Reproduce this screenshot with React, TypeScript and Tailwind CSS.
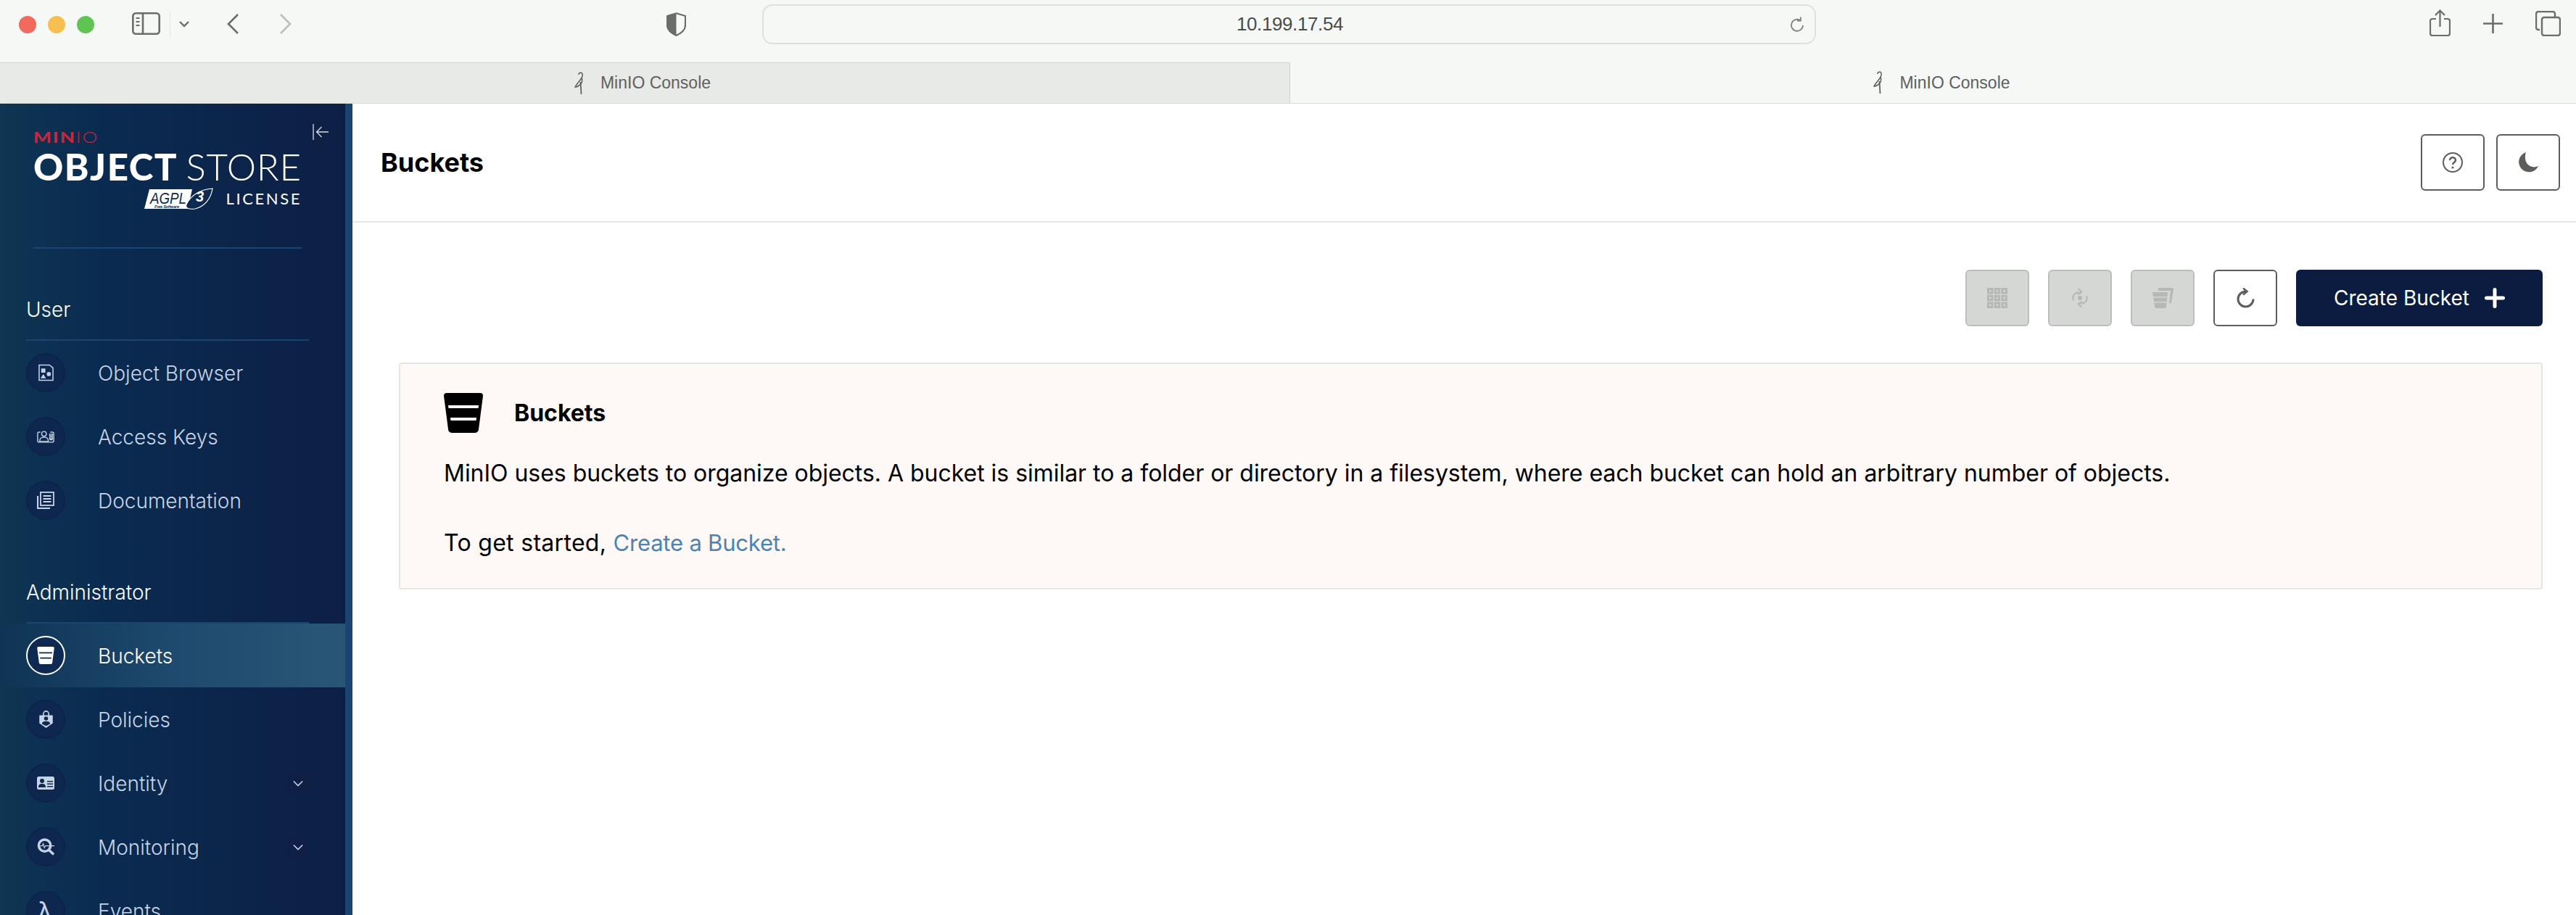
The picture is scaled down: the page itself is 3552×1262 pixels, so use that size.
import { ReactNode } from 'react';

const Sans = "font-['Liberation_Sans',sans-serif]";

function BucketIcon({ className, stripe }: { className: string; stripe: string }) {
  return (
    <svg viewBox="0 0 54 55" className={className}>
      <path
        d="M4 0h46a4 4 0 0 1 4 4l-6 46a5 5 0 0 1-5 5H11a5 5 0 0 1-5-5L0 4a4 4 0 0 1 4-4z"
        fill="currentColor"
      />
      <path d="M6 17h42l-.5 4H6.500zM9 34h36l-.5 4H9.500z" fill={stripe} />
    </svg>
  );
}

function BirdIcon({ className }: { className: string }) {
  return (
    <svg viewBox="0 0 14 32" className={className} fill="none" stroke="#5c5e5c" strokeWidth="1.500">
      <path d="M6 4C6 1 10 0 11 3c1 3-1 5-2 7-2 3-6 7-8 11 4 0 7-3 9-6 1-3 1-5 0-7" />
      <path d="M8.500 14l1 17" strokeWidth="1.700" />
    </svg>
  );
}

function ObjectBrowserIcon() {
  return (
    <svg viewBox="0 0 22 24" className="w-[21px] h-[24px]" fill="currentColor">
      <path d="M1 1h15l5 4v18H1z" fill="none" stroke="currentColor" strokeWidth="1.600" />
      <rect x="4" y="6" width="6" height="6" />
      <circle cx="15" cy="14" r="3" />
      <path d="M7 14l4 6H3z" />
    </svg>
  );
}

function AccessKeysIcon() {
  return (
    <svg viewBox="0 0 26 20" className="w-[24px] h-[19px]" fill="none" stroke="currentColor" strokeWidth="1.500">
      <path d="M5 3H3a2 2 0 0 0-2 2v11a2 2 0 0 0 2 2h20a2 2 0 0 0 2-2V5a2 2 0 0 0-2-2h-3" />
      <circle cx="10.500" cy="5.500" r="3.500" />
      <path d="M4 17c0-5 2-6.500 6.500-6.500S17 12 17 17z" />
      <path d="M19 6h4v2.500h-4zM19 10.500h4V13h-4zM19 14.500h4" strokeWidth="1.400" />
    </svg>
  );
}

function DocumentationIcon() {
  return (
    <svg viewBox="0 0 24 24" className="w-[24px] h-[24px]" fill="none" stroke="currentColor" strokeWidth="1.800">
      <rect x="5" y="1" width="18" height="18" />
      <path d="M8.500 6h11M8.500 10h11M8.500 14h11" />
      <path d="M1 6v17h17" strokeWidth="2.200" />
    </svg>
  );
}

function PoliciesIcon() {
  return (
    <svg viewBox="0 0 20 26" className="w-[19px] h-[24px]" fill="currentColor">
      <path d="M6 8V5a4 4 0 0 1 8 0v3" fill="none" stroke="currentColor" strokeWidth="1.800" />
      <path d="M0 7h20v12l-10 7-10-7z" />
      <circle cx="10" cy="12" r="3" fill="#0f2a52" />
      <path d="M4 20c0-3 2-4 6-4s6 1 6 4l-6 3z" fill="#0f2a52" />
    </svg>
  );
}

function IdentityIcon() {
  return (
    <svg viewBox="0 0 24 18" className="w-[24px] h-[18px]" fill="currentColor">
      <rect width="24" height="18" rx="2.500" />
      <circle cx="7" cy="6" r="3" fill="#0f2a52" />
      <path d="M2 15c0-4 2-5 5-5s5 1 5 5z" fill="#0f2a52" />
      <path d="M14 6h8v1.500h-8zM14 9.500h8V11h-8zM14 13h8v1.500h-8z" fill="#0f2a52" />
    </svg>
  );
}

function MonitoringIcon() {
  return (
    <svg viewBox="0 0 25 25" className="w-[25px] h-[24px]" fill="none" stroke="currentColor">
      <circle cx="10.500" cy="10.500" r="8.500" strokeWidth="3.600" />
      <path d="M16.500 17l7 6.500" strokeWidth="3.600" />
      <path d="M4 11h3l1.500-3 1.500 6 1.500-3h13" strokeWidth="1.200" />
    </svg>
  );
}

function NavItem({ label, icon, active, expand }: { label: string; icon: ReactNode; active?: boolean; expand?: boolean }) {
  return (
    <div
      className={`flex h-[88px] shrink-0 items-center pl-[36px] pr-[50px] ${
        active ? 'bg-linear-to-r from-[#0f3454] via-[#1d4a6e] to-[#2a5676] text-white' : 'text-[#c6d4e6]'
      }`}
    >
      <div
        className={`flex size-[54px] shrink-0 items-center justify-center rounded-full ${
          active ? 'border-2 border-white bg-[#0f2a52] text-white' : 'border-2 border-[#0d2349] bg-[#0e274f] text-[#c6d4e6]'
        }`}
      >
        {icon}
      </div>
      <span className="ml-[45px] mt-[2px] text-[28px] font-light leading-none">{label}</span>
      {expand && (
        <div className="ml-auto flex size-[30px] items-center justify-center rounded-[4px] bg-[#0f1f45] text-[#c6d4e6]">
          <svg viewBox="0 0 16 10" className="w-[14px] h-[9px]" fill="none" stroke="currentColor" strokeWidth="1.800">
            <path d="M1 1.500l7 7 7-7" />
          </svg>
        </div>
      )}
    </div>
  );
}

function SectionLabel({ children }: { children: ReactNode }) {
  return (
    <div className="mx-[36px] mr-[50px] flex h-[60px] shrink-0 items-center border-b-2 border-[#1a4570] pb-[25px] text-[28px] font-light leading-none text-white">
      {children}
    </div>
  );
}

function Sidebar() {
  return (
    <aside className="relative flex h-full w-[486px] shrink-0 flex-col overflow-hidden border-r-[10px] border-[#1a4570] bg-linear-to-r from-[#0f3552] via-[#0a2b50] via-30% to-[#0d1f45] font-['Inter',sans-serif]">
      <button className="absolute left-[431px] top-[27px] text-[#d5dbe6]">
        <svg viewBox="0 0 23 24" className="w-[23px] h-[24px]" fill="none" stroke="currentColor" strokeWidth="1.300">
          <path d="M1 1v22M22 12H6M12.500 5L5.500 12l7 7" />
        </svg>
      </button>

      {/* logo */}
      <div className="mx-[46px] mr-[60px] flex h-[200px] shrink-0 flex-col border-b-2 border-[#1a4570] pt-[36px] font-['Lato',sans-serif]">
        <div className="h-[20px] origin-left scale-x-[1.25] text-[21px] leading-[20px] tracking-[1.500px] text-[#c0293f]">
          <span className="font-black">MIN</span>
          <span className="font-light">IO</span>
        </div>
        <div className="mt-[9px] flex h-[42px] items-center justify-between text-[51px] leading-none text-white">
          <span className="font-black tracking-[1.500px]">OBJECT</span>
          <span className="font-light tracking-[0.800px]">STORE</span>
        </div>
        <div className="mt-[8px] flex items-center justify-end">
          <svg viewBox="0 0 95 32" className="w-[95px] h-[32px]">
            <path d="M7 3h59l-6 27H0z" fill="#fff" />
            <text x="8" y="23" fontFamily="Liberation Sans" fontSize="22" fontStyle="italic" fontWeight="400" textLength="50" lengthAdjust="spacingAndGlyphs" fill="#0e2a50">
              AGPL
            </text>
            <text x="14" y="28.500" fontFamily="Liberation Sans" fontSize="5.500" fontWeight="700" fontStyle="italic" textLength="34" fill="#0e2a50">
              Free Software
            </text>
            <path d="M58 24c6-13 20-21 36-22-2 14-11 25-24 28-9 1-14-1-12-6z" fill="#0e2a50" stroke="#fff" strokeWidth="1.200" />
            <text x="71" y="20" fontFamily="Liberation Sans" fontSize="20" fontStyle="italic" fontWeight="700" fill="#fff">
              3
            </text>
          </svg>
          <span className="ml-[18px] text-[22px] leading-none tracking-[2.600px] text-white">LICENSE</span>
        </div>
      </div>

      <div className="flex flex-col pt-[67px]">
        <SectionLabel>User</SectionLabel>
        <NavItem label="Object Browser" icon={<ObjectBrowserIcon />} />
        <NavItem label="Access Keys" icon={<AccessKeysIcon />} />
        <NavItem label="Documentation" icon={<DocumentationIcon />} />
        <div className="h-[66px] shrink-0" />
        <SectionLabel>Administrator</SectionLabel>
        <NavItem label="Buckets" active icon={<BucketIcon className="w-[24px] h-[24px] text-white" stripe="#0f2a52" />} />
        <NavItem label="Policies" icon={<PoliciesIcon />} />
        <NavItem label="Identity" expand icon={<IdentityIcon />} />
        <NavItem label="Monitoring" expand icon={<MonitoringIcon />} />
        <NavItem label="Events" icon={<span className="text-[34px] leading-none">λ</span>} />
      </div>
    </aside>
  );
}

function OutlineButton({ children, className }: { children: ReactNode; className?: string }) {
  return (
    <button className={`flex h-[78px] w-[88px] items-center justify-center rounded-[6px] border-2 border-[#5c5e5b] bg-white text-[#5c5e5b] ${className ?? ''}`}>
      {children}
    </button>
  );
}

function DisabledButton({ children }: { children: ReactNode }) {
  return (
    <button disabled className="flex h-[78px] w-[88px] items-center justify-center rounded-[6px] border-2 border-[#bcbebb] bg-[#d5d7d4] text-[#b6b8b5]">
      {children}
    </button>
  );
}

function BrowserChrome() {
  return (
    <>
      <div className={`flex h-[86px] shrink-0 items-start bg-[#f6f8f5] text-[#6b6d6a] ${Sans}`}>
        <div className="mt-[22px] ml-[26px] flex gap-[16px]">
          <span className="size-[24px] rounded-full bg-[#f16a5e]" />
          <span className="size-[24px] rounded-full bg-[#f6bf4f]" />
          <span className="size-[24px] rounded-full bg-[#5fc454]" />
        </div>
        <svg viewBox="0 0 39 31" className="ml-[52px] mt-[17px] w-[39px] h-[31px]" fill="none" stroke="currentColor" strokeWidth="2.600">
          <rect x="1.300" y="1.300" width="36.400" height="28.400" rx="4" />
          <path d="M15 1.300v28.400" />
          <path d="M5.500 8h5M5.500 13h5M5.500 18h5" strokeWidth="2" />
        </svg>
        <span className="ml-[13px] mt-[16px] h-[36px] w-[1px] bg-[#e3e5e2]" />
        <svg viewBox="0 0 14 9" className="ml-[12px] mt-[29px] w-[14px] h-[9px]" fill="none" stroke="currentColor" strokeWidth="2.400">
          <path d="M1 1l6 6 6-6" />
        </svg>
        <svg viewBox="0 0 18 28" className="ml-[51px] mt-[19px] w-[18px] h-[28px]" fill="none" stroke="currentColor" strokeWidth="2.600">
          <path d="M16 1L3 14l13 13" />
        </svg>
        <svg viewBox="0 0 18 28" className="ml-[55px] mt-[19px] w-[18px] h-[28px] text-[#bcbebb]" fill="none" stroke="currentColor" strokeWidth="2.600">
          <path d="M2 1l13 13L2 27" />
        </svg>
        <svg viewBox="0 0 27 33" className="ml-[516px] mt-[17px] w-[27px] h-[33px]" fill="none">
          <path d="M13.500 1.300L26 5v13c0 7-6 11-12.500 14C7 29 1 25 1 18V5z" stroke="currentColor" strokeWidth="2.200" />
          <path d="M13.500 1.300L1 5v13c0 7 6 11 12.500 14z" fill="currentColor" />
        </svg>
        <div className="ml-[105px] mt-[6px] flex h-[55px] w-[1453px] items-center rounded-[14px] border-2 border-[#dfe1de] pl-[652px] text-[26px] text-[#4a4c4a]">
          <span className="tracking-[-0.400px]">10.199.17.54</span>
          <svg viewBox="0 0 24 24" className="ml-auto mr-[12px] w-[24px] h-[24px] text-[#808280]" fill="none" stroke="currentColor" strokeWidth="1.800">
            <path d="M20 13a8 8 0 1 1-3-6.500M17 1.500v5h-5" />
          </svg>
        </div>
        <svg viewBox="0 0 29 37" className="ml-[846px] mt-[13px] w-[29px] h-[37px]" fill="none" stroke="currentColor" strokeWidth="2.200">
          <path d="M9 13H4a3 3 0 0 0-3 3v17a3 3 0 0 0 3 3h21a3 3 0 0 0 3-3V16a3 3 0 0 0-3-3h-5" />
          <path d="M14.500 24V2M8 8l6.500-6.500L21 8" />
        </svg>
        <svg viewBox="0 0 27 27" className="ml-[45px] mt-[19px] w-[27px] h-[27px]" fill="none" stroke="currentColor" strokeWidth="2.600">
          <path d="M13.500 0v27M0 13.500h27" />
        </svg>
        <svg viewBox="0 0 35 35" className="ml-[45px] mt-[15px] w-[35px] h-[35px]" fill="none" stroke="currentColor" strokeWidth="2.400">
          <path d="M6 26H4a3 3 0 0 1-3-3V4a3 3 0 0 1 3-3h20a3 3 0 0 1 3 3v4" />
          <rect x="9" y="9" width="25" height="25" rx="3" />
        </svg>
      </div>
      <div className={`flex h-[57px] shrink-0 border-b-[1px] border-[#d8dad7] text-[23px] text-[#5f615f] ${Sans}`}>
        <div className="flex w-[1779px] items-center justify-center gap-[22px] border-r border-t border-[#d3d5d2] bg-[#e8eae7] pr-[6px]">
          <BirdIcon className="w-[14px] h-[32px]" />
          <span>MinIO Console</span>
        </div>
        <div className="flex flex-1 items-center justify-center gap-[22px] bg-[#f6f8f5] pl-[24px]">
          <BirdIcon className="w-[14px] h-[32px]" />
          <span>MinIO Console</span>
        </div>
      </div>
    </>
  );
}

export default function App() {
  return (
    <div className="flex h-[1262px] w-[3552px] flex-col overflow-hidden bg-white">
      <BrowserChrome />
      <div className="flex min-h-0 flex-1">
        <Sidebar />
        <main className="flex min-w-0 flex-1 flex-col font-['Inter',sans-serif]">
          <header className="flex h-[164px] shrink-0 items-center justify-between border-b-2 border-[#e5e7e4] pl-[39px] pr-[22px]">
            <h1 className="text-[36px] font-bold leading-none text-black">Buckets</h1>
            <div className="flex gap-[16px]">
              <OutlineButton>
                <svg viewBox="0 0 28 28" className="w-[28px] h-[28px]" fill="none" stroke="currentColor" strokeWidth="2">
                  <circle cx="14" cy="14" r="13" />
                  <path d="M10 11c0-5 8-5 8 0 0 3-4 3-4 6" strokeWidth="2.600" />
                  <circle cx="14" cy="21" r="1.600" fill="currentColor" stroke="none" />
                </svg>
              </OutlineButton>
              <OutlineButton>
                <svg viewBox="0 0 28 28" className="w-[28px] h-[28px]" fill="currentColor">
                  <path d="M11 0a14 14 0 1 0 17 19C18 24 6 15 11 0z" />
                </svg>
              </OutlineButton>
            </div>
          </header>

          <div className="flex flex-col pl-[64px] pr-[46px] pt-[65px]">
            <div className="flex justify-end gap-[26px]">
              <DisabledButton>
                <svg viewBox="0 0 28 28" className="w-[28px] h-[28px]" fill="currentColor">
                  <path
                    fillRule="evenodd"
                    d="M0 0h8.500v8.500H0zM3 3v2.500h2.500V3zM9.750 0h8.500v8.500h-8.500zM12.750 3v2.500h2.500V3zM19.500 0H28v8.500h-8.500zM22.500 3v2.500H25V3zM0 9.750h8.500v8.500H0zM3 12.750v2.500h2.500v-2.500zM9.750 9.750h8.500v8.500h-8.500zM12.750 12.750v2.500h2.500v-2.500zM19.500 9.750H28v8.500h-8.500zM22.500 12.750v2.500H25v-2.500zM0 19.500h8.500V28H0zM3 22.500V25h2.500v-2.500zM9.750 19.500h8.500V28h-8.500zM12.750 22.500V25h2.500v-2.500zM19.500 19.500H28V28h-8.500zM22.500 22.500V25H25v-2.500z"
                  />
                </svg>
              </DisabledButton>
              <DisabledButton>
                <svg viewBox="0 0 24 28" className="w-[24px] h-[28px]" fill="none" stroke="currentColor" strokeWidth="2.200">
                  <path d="M3 17c-2-5 1-10 7-11M10 1l4 5-5 3" />
                  <path d="M21 11c2 5-1 10-7 11M14 27l-4-5 5-3" />
                  <circle cx="12" cy="14" r="3" fill="currentColor" stroke="none" />
                </svg>
              </DisabledButton>
              <DisabledButton>
                <svg viewBox="0 0 30 28" className="w-[30px] h-[28px]" fill="currentColor">
                  <path d="M9 1a1 1 0 0 1 1-1h18a2 2 0 0 1 2 2l-3 19h-3l2-17H9z" />
                  <path d="M1 6h21l-2 20a2 2 0 0 1-2 2H6a2 2 0 0 1-2-2z" />
                  <path d="M2 12h19v1.500H2zM3 19h17v1.500H3z" fill="#d5d7d4" />
                </svg>
              </DisabledButton>
              <OutlineButton>
                <svg viewBox="0 0 25 28" className="w-[25px] h-[28px]" fill="none" stroke="currentColor" strokeWidth="3">
                  <path d="M12.500 5A10.500 10.500 0 1 0 23 15.500" />
                  <path d="M9 .5l5.500 4.500L9 9.500" strokeWidth="2.600" />
                </svg>
              </OutlineButton>
              <button className="flex h-[78px] w-[340px] items-center justify-center gap-[21px] rounded-[6px] bg-[#0c1c40] text-[28px] text-white">
                <span>Create Bucket</span>
                <svg viewBox="0 0 28 28" className="w-[28px] h-[28px]" fill="none" stroke="currentColor" strokeWidth="5" strokeLinecap="round">
                  <path d="M14 2.500v23M2.500 14h23" />
                </svg>
              </button>
            </div>

            <section className="mt-[50px] h-[313px] rounded-[4px] border-2 border-[#e5e7e4] bg-[#fef9f7] pl-[60px] pt-[40px] text-[32px] leading-[48px] text-black">
              <div className="flex h-[55px] items-center gap-[43px]">
                <BucketIcon className="w-[54px] h-[55px] text-black" stripe="#fef9f7" />
                <span className="text-[32px] font-bold leading-none">Buckets</span>
              </div>
              <p className="mt-[32px] tracking-[-0.030px]">
                MinIO uses buckets to organize objects. A bucket is similar to a folder or directory in a filesystem, where each bucket can hold an arbitrary number of objects.
              </p>
              <p className="mt-[48px] tracking-[0.300px]">
                To get started, <a className="text-[31px] tracking-[-0.200px] text-[#4a84b5]">Create a Bucket.</a>
              </p>
            </section>
          </div>
        </main>
      </div>
    </div>
  );
}
